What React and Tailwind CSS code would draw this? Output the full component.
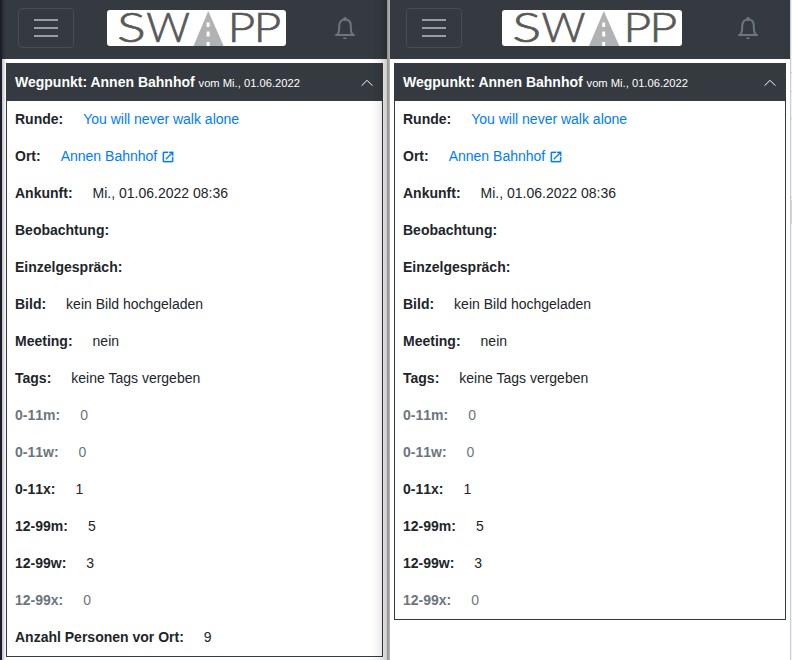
import React from 'react';

const ROWS = [
  { label: 'Runde:', value: 'You will never walk alone', link: true },
  { label: 'Ort:', value: 'Annen Bahnhof', link: true, external: true },
  { label: 'Ankunft:', value: 'Mi., 01.06.2022 08:36' },
  { label: 'Beobachtung:', value: '' },
  { label: 'Einzelgespräch:', value: '' },
  { label: 'Bild:', value: 'kein Bild hochgeladen' },
  { label: 'Meeting:', value: 'nein' },
  { label: 'Tags:', value: 'keine Tags vergeben' },
  { label: '0-11m:', value: '0', muted: true, unkerned: true },
  { label: '0-11w:', value: '0', muted: true, unkerned: true },
  { label: '0-11x:', value: '1', unkerned: true },
  { label: '12-99m:', value: '5' },
  { label: '12-99w:', value: '3' },
  { label: '12-99x:', value: '0', muted: true },
];

const TOTAL = { label: 'Anzahl Personen vor Ort:', value: '9' };

function Logo({ width }) {
  return (
    <svg
      width={width}
      height="36"
      viewBox="0 0 180 36"
      preserveAspectRatio="none"
      className="block shrink-0 overflow-visible rounded-[3px] bg-white"
    >
      <g fill="#595959" stroke="#595959" strokeWidth="0.7" fontFamily="Lato, sans-serif" fontWeight="300" fontSize="42">
        <text x="10.2" y="32.3" textLength="29" lengthAdjust="spacingAndGlyphs">S</text>
        <text x="39.5" y="32.3" textLength="44" lengthAdjust="spacingAndGlyphs">W</text>
        <text x="121.3" y="32.3" textLength="28" lengthAdjust="spacingAndGlyphs">P</text>
        <text x="147.3" y="32.3" textLength="28" lengthAdjust="spacingAndGlyphs">P</text>
      </g>
      <path d="M101.8 1L117.3 36H87Z" fill="#b1b2b4" />
      <path d="M101.7 12.5v4.5M101.7 21.5v5M101.7 32v4" stroke="#fff" strokeWidth="3" />
    </svg>
  );
}

function Bell() {
  return (
    <svg width="22" height="24" viewBox="0 0 22 24" fill="none" className="block shrink-0">
      <path
        d="M1.2 19H20.8M3.2 18.4C5 16.9 5.2 15.2 5.2 12V10C5.2 6 7.5 3.6 11 3.6S16.8 6 16.8 10V12C16.8 15.2 17 16.9 18.8 18.4"
        stroke="#6c757d"
        strokeWidth="2"
      />
      <circle cx="11" cy="3" r="2" fill="#6c757d" />
      <path d="M9 21.5H13A2 1.8 0 0 1 9 21.5Z" fill="#6c757d" />
    </svg>
  );
}

function OpenInNew() {
  return (
    <svg width="14" height="14" viewBox="0 0 24 24" fill="currentColor" className="block shrink-0">
      <path d="M19 19H5V5h7V3H5a2 2 0 0 0-2 2v14a2 2 0 0 0 2 2h14c1.1 0 2-.9 2-2v-7h-2v7zM14 3v2h3.59l-9.83 9.83 1.41 1.41L19 6.41V10h2V3h-7z" stroke="currentColor" strokeWidth="0.5" />
    </svg>
  );
}

function Navbar({ logoWidth, logoGap, bellGap }) {
  return (
    <header className="flex h-[59px] bg-[#343a40] pl-4 pt-2">
      <button className="flex h-10 w-14 shrink-0 flex-col items-center justify-center gap-[6px] rounded-[4px] border border-[#484d52]">
        <span className="h-[2px] w-6 bg-[#9a9da0]" />
        <span className="h-[2px] w-6 bg-[#9a9da0]" />
        <span className="h-[2px] w-6 bg-[#9a9da0]" />
      </button>
      <div className={`${logoGap} pt-[2px]`}>
        <Logo width={logoWidth} />
      </div>
      <div className={`${bellGap} pt-[8px]`}>
        <Bell />
      </div>
    </header>
  );
}

function Row({ label, value, link, external, muted, unkerned }) {
  return (
    <div className={`flex h-[37px] items-center gap-5 whitespace-nowrap pl-2 ${muted ? 'text-[#6c757d]' : 'text-[#212529]'}`}>
      <span className={`font-bold ${unkerned ? '[font-kerning:none]' : ''}`}>{label}</span>
      <span className={`flex items-center gap-1 ${link ? 'text-[#007bff]' : ''}`}>
        {value}
        {external && <OpenInNew />}
      </span>
    </div>
  );
}

function Card({ rows }) {
  return (
    <section className="border border-[#343a40]">
      <div className="flex h-[37px] items-center justify-between bg-[#343a40] pl-2 pr-[9px] text-white">
        <div className="whitespace-nowrap">
          <span className="font-bold">Wegpunkt: Annen Bahnhof</span>{' '}
          <span className="text-[11.2px]">vom Mi., 01.06.2022</span>
        </div>
        <svg width="12" height="8" viewBox="0 0 12 8" fill="none" className="mt-px">
          <path d="M0.6 6.7L6 1.3L11.4 6.7" stroke="#fff" strokeWidth="1" />
        </svg>
      </div>
      {rows.map((row) => (
        <Row key={row.label} {...row} />
      ))}
    </section>
  );
}

export default function App() {
  return (
    <div className="flex h-[660px] w-[792px] overflow-hidden bg-white font-['Liberation_Sans',Arial,sans-serif] text-[14px] leading-[21px]">
      <div className="w-[2px] shrink-0 bg-[#1c1f2b]" />
      <div className="relative w-[385px] shrink-0 bg-white">
        <Navbar logoWidth={179} logoGap="ml-[33px]" bellGap="ml-[48px]" />
        <div className="pl-1 pr-1 pt-1">
          <Card rows={[...ROWS, TOTAL]} />
        </div>
        <div className="pointer-events-none absolute inset-y-0 right-0 w-4 bg-linear-to-r from-transparent via-black/5 to-black/20" />
        <div className="pointer-events-none absolute inset-y-0 left-0 w-1 bg-linear-to-r from-black/25 to-transparent" />
      </div>
      <div className="w-[3px] shrink-0 bg-linear-to-r from-[#8f8d8c] to-[#b8b5b3]" />
      <div className="w-[400px] shrink-0 bg-white">
        <Navbar logoWidth={180} logoGap="ml-[40px]" bellGap="ml-[55px]" />
        <div className="pl-1 pr-1 pt-1">
          <Card rows={ROWS} />
        </div>
      </div>
      <div className="flex w-[2px] shrink-0 flex-col border-l border-[#c9cbd6] bg-[#f1f1f7]">
        <div className="mt-[72px] h-px bg-[#c9cbd6]" />
        <div className="mt-[18px] h-px bg-[#c9cbd6]" />
        <div className="mt-[26px] h-px bg-[#c9cbd6]" />
        <div className="mt-[78px] h-px bg-[#c9cbd6]" />
        <div className="mt-[2px] h-6 bg-[#d5d2dc]" />
      </div>
    </div>
  );
}
